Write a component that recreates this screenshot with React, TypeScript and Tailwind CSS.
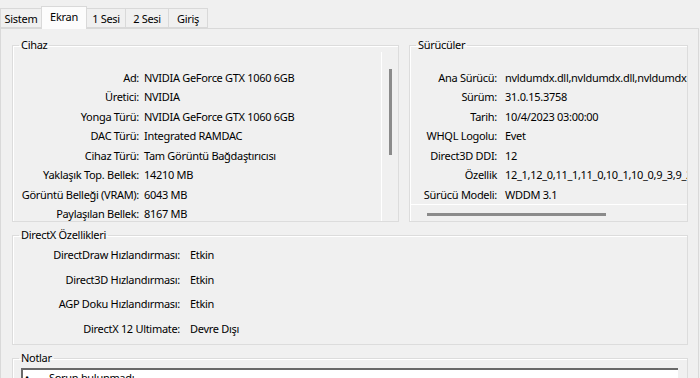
const deviceRows: [string, string][] = [
  ["Ad:", "NVIDIA GeForce GTX 1060 6GB"],
  ["Üretici:", "NVIDIA"],
  ["Yonga Türü:", "NVIDIA GeForce GTX 1060 6GB"],
  ["DAC Türü:", "Integrated RAMDAC"],
  ["Cihaz Türü:", "Tam Görüntü Bağdaştırıcısı"],
  ["Yaklaşık Top. Bellek:", "14210 MB"],
  ["Görüntü Belleği (VRAM):", "6043 MB"],
  ["Paylaşılan Bellek:", "8167 MB"],
];

const driverRows: [string, string][] = [
  ["Ana Sürücü:", "nvldumdx.dll,nvldumdx.dll,nvldumdx.dll,nvldumdx.dll"],
  ["Sürüm:", "31.0.15.3758"],
  ["Tarih:", "10/4/2023 03:00:00"],
  ["WHQL Logolu:", "Evet"],
  ["Direct3D DDI:", "12"],
  ["Özellik", "12_1,12_0,11_1,11_0,10_1,10_0,9_3,9_2,9_1"],
  ["Sürücü Modeli:", "WDDM 3.1"],
];

const dxRows: [string, string][] = [
  ["DirectDraw Hızlandırması:", "Etkin"],
  ["Direct3D Hızlandırması:", "Etkin"],
  ["AGP Doku Hızlandırması:", "Etkin"],
  ["DirectX 12 Ultimate:", "Devre Dışı"],
];

const tabs: [string, string][] = [
  ["Sistem", "w-[42px]"],
  ["Ekran", "w-[46px]"],
  ["1 Sesi", "w-[40px]"],
  ["2 Sesi", "w-[44px]"],
  ["Giriş", "w-[40px]"],
];

function Legend({ children }: { children: string }) {
  return <legend className="ml-[6px] px-[2px] leading-[14px]">{children}</legend>;
}

export default function App() {
  return (
    <div
      className="w-[700px] h-[378px] overflow-hidden bg-[#f0f0f0] text-[11px] tracking-[-0.3px] text-black"
      style={{ fontFamily: '"Noto Sans", "DejaVu Sans", sans-serif' }}
    >
      {/* tabs */}
      <div className="flex h-[28px] items-end relative z-10">
        {tabs.map(([t, w]) =>
          t === "Ekran" ? (
            <div
              key={t}
              className={`${w} h-[23px] -mb-[1px] -ml-[1px] pt-[2px] border border-b-0 border-[#d9d9d9] bg-[#fcfcfc] text-center leading-[16px]`}
            >
              {t}
            </div>
          ) : (
            <div
              key={t}
              className={`${w} h-[20px] pt-[2px] border border-[#d9d9d9] -ml-[1px] first:ml-0 bg-[#f0f0f0] text-center leading-[16px]`}
            >
              {t}
            </div>
          )
        )}
      </div>

      {/* panel */}
      <div className="w-[699px] h-[351px] border border-[#d9d9d9] border-b-0 px-[11px] pt-[9px]">
        <div className="flex gap-[10px]">
          {/* Cihaz */}
          <fieldset className="w-[387px] min-w-0 shrink-0 h-[184px] border border-[#dcdcdc] shadow-[inset_1px_1px_0_#fff]">
            <Legend>Cihaz</Legend>
            <div className="flex h-[169px]">
              <div className="flex-1 pt-[16px]">
                {deviceRows.map(([l, v]) => (
                  <div key={l} className="flex h-[19.5px] items-center whitespace-nowrap">
                    <span className="w-[126px] shrink-0 text-right">{l}</span>
                    <span className="ml-[5px]">{v}</span>
                  </div>
                ))}
              </div>
              <div className="w-[17px] border-l border-white">
                <div className="ml-[7px] mt-[17px] h-[86px] w-[3px] bg-[#8b8b8b]" />
              </div>
            </div>
          </fieldset>

          {/* Sürücüler */}
          <fieldset className="w-[279px] min-w-0 shrink-0 h-[184px] border border-[#dcdcdc] shadow-[inset_1px_1px_0_#fff]">
            <Legend>Sürücüler</Legend>
            <div className="h-[152px] overflow-hidden pt-[16px]">
              {driverRows.map(([l, v]) => (
                <div key={l} className="flex h-[19.5px] items-center whitespace-nowrap">
                  <span className="w-[87px] shrink-0 text-right">{l}</span>
                  <span className="ml-[8px]">{v}</span>
                </div>
              ))}
            </div>
            <div className="h-[17px] border-t border-white">
              <div className="ml-[17px] mt-[8px] h-[3px] w-[179px] bg-[#8b8b8b]" />
            </div>
          </fieldset>
        </div>

        {/* DirectX Özellikleri */}
        <fieldset className="mt-[6px] w-[676px] h-[117px] border border-[#dcdcdc] shadow-[inset_1px_1px_0_#fff]">
          <Legend>DirectX Özellikleri</Legend>
          <div className="pt-[1px]">
            {dxRows.map(([l, v]) => (
              <div key={l} className="flex h-[24.5px] items-center whitespace-nowrap">
                <span className="w-[167px] text-right">{l}</span>
                <span className="ml-[10px]">{v}</span>
              </div>
            ))}
          </div>
        </fieldset>

        {/* Notlar */}
        <fieldset className="mt-[6px] w-[676px] h-[60px] border border-[#dcdcdc] shadow-[inset_1px_1px_0_#fff]">
          <Legend>Notlar</Legend>
          <div className="mt-[3px] ml-[8px] mr-[9px] h-[40px] border-t-2 border-l-2 border-[#696969] bg-white">
            <div className="flex items-center leading-[16px] pl-[2px]">
              <span className="w-[24px]">•</span>
              <span>Sorun bulunmadı.</span>
            </div>
          </div>
        </fieldset>
      </div>
    </div>
  );
}
